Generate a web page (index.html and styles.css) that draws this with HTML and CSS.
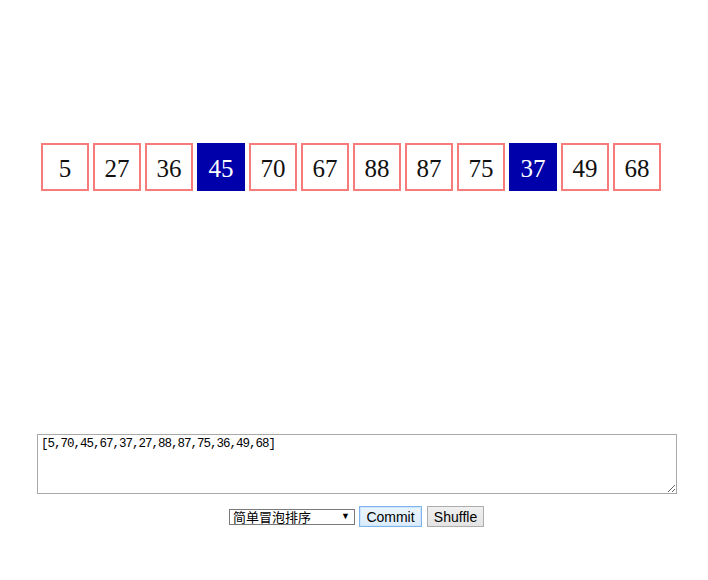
FILE: index.html
```html
<!DOCTYPE html>
<html>
<head>
<meta charset="utf-8">
<link rel="stylesheet" href="styles.css">
</head>
<body>
<div class="stage">
  <div class="cells">
    <div class="cell">5</div>
    <div class="cell">27</div>
    <div class="cell">36</div>
    <div class="cell active">45</div>
    <div class="cell">70</div>
    <div class="cell">67</div>
    <div class="cell">88</div>
    <div class="cell">87</div>
    <div class="cell">75</div>
    <div class="cell active">37</div>
    <div class="cell">49</div>
    <div class="cell">68</div>
  </div>
</div>
<div class="panel">
  <textarea class="input">[5,70,45,67,37,27,88,87,75,36,49,68]</textarea>
  <div class="controls">
    <span class="select-wrap">
      <select class="algo"><option>简单冒泡排序</option></select>
      <span class="arrow">▼</span>
    </span>
    <button class="btn btn-default btn-commit">Commit</button>
    <button class="btn btn-shuffle">Shuffle</button>
  </div>
</div>
</body>
</html>
```
FILE: styles.css
```css
html, body {
  margin: 0;
  padding: 0;
  background: #fff;
}
.stage {
  height: 434px;
  box-sizing: border-box;
  padding-top: 143px;
}
.cells {
  display: flex;
  gap: 4px;
  padding-left: 41px;
}
.cell {
  width: 48px;
  height: 48px;
  box-sizing: border-box;
  border: 2px solid #f77b7b;
  display: flex;
  align-items: center;
  justify-content: center;
  font-family: "Liberation Serif", serif;
  font-size: 25px;
  color: #111;
  padding-top: 3px;
}
.cell.active {
  background: #0000aa;
  border-color: #0000aa;
  color: #fff;
}
.panel {
  padding-left: 37px;
}
.input {
  display: block;
  margin: 0;
  width: 640px;
  height: 60px;
  box-sizing: border-box;
  border: 1px solid #a9a9a9;
  padding: 2px 3px;
  font-family: "Liberation Mono", monospace;
  font-size: 12.5px;
  letter-spacing: -1px;
  color: #000;
  resize: both;
  outline: none;
}
.controls {
  display: flex;
  align-items: center;
  margin-top: 12px;
  padding-left: 192px;
}
.select-wrap {
  position: relative;
  display: inline-block;
}
.algo {
  appearance: none;
  -webkit-appearance: none;
  width: 126px;
  height: 16px;
  box-sizing: border-box;
  border: 1px solid #7a7a7a;
  border-radius: 0;
  background: #fff;
  padding: 0 0 0 3px;
  margin: 0;
  font-family: "Noto Sans CJK SC", sans-serif;
  font-size: 13px;
  line-height: 14px;
  color: #000;
  display: block;
}
.arrow {
  position: absolute;
  right: 5px;
  top: 0;
  font-size: 9px;
  line-height: 14px;
  color: #000;
  pointer-events: none;
}
.btn {
  height: 21px;
  box-sizing: border-box;
  margin: 0;
  padding: 0;
  border: 1px solid #adadad;
  border-radius: 0;
  background: linear-gradient(#f0f0f0, #e3e3e3);
  font-family: "Liberation Sans", Arial, sans-serif;
  font-size: 14px;
  color: #000;
}
.btn-commit {
  width: 63px;
  margin-left: 4px;
}
.btn-shuffle {
  width: 57px;
  margin-left: 5px;
}
.btn-default {
  border: 1px solid #7eb4ea;
  background: linear-gradient(#ebf4fc, #dcecfc);
  box-shadow: inset 0 0 0 1px #cfe5fb;
}
```
